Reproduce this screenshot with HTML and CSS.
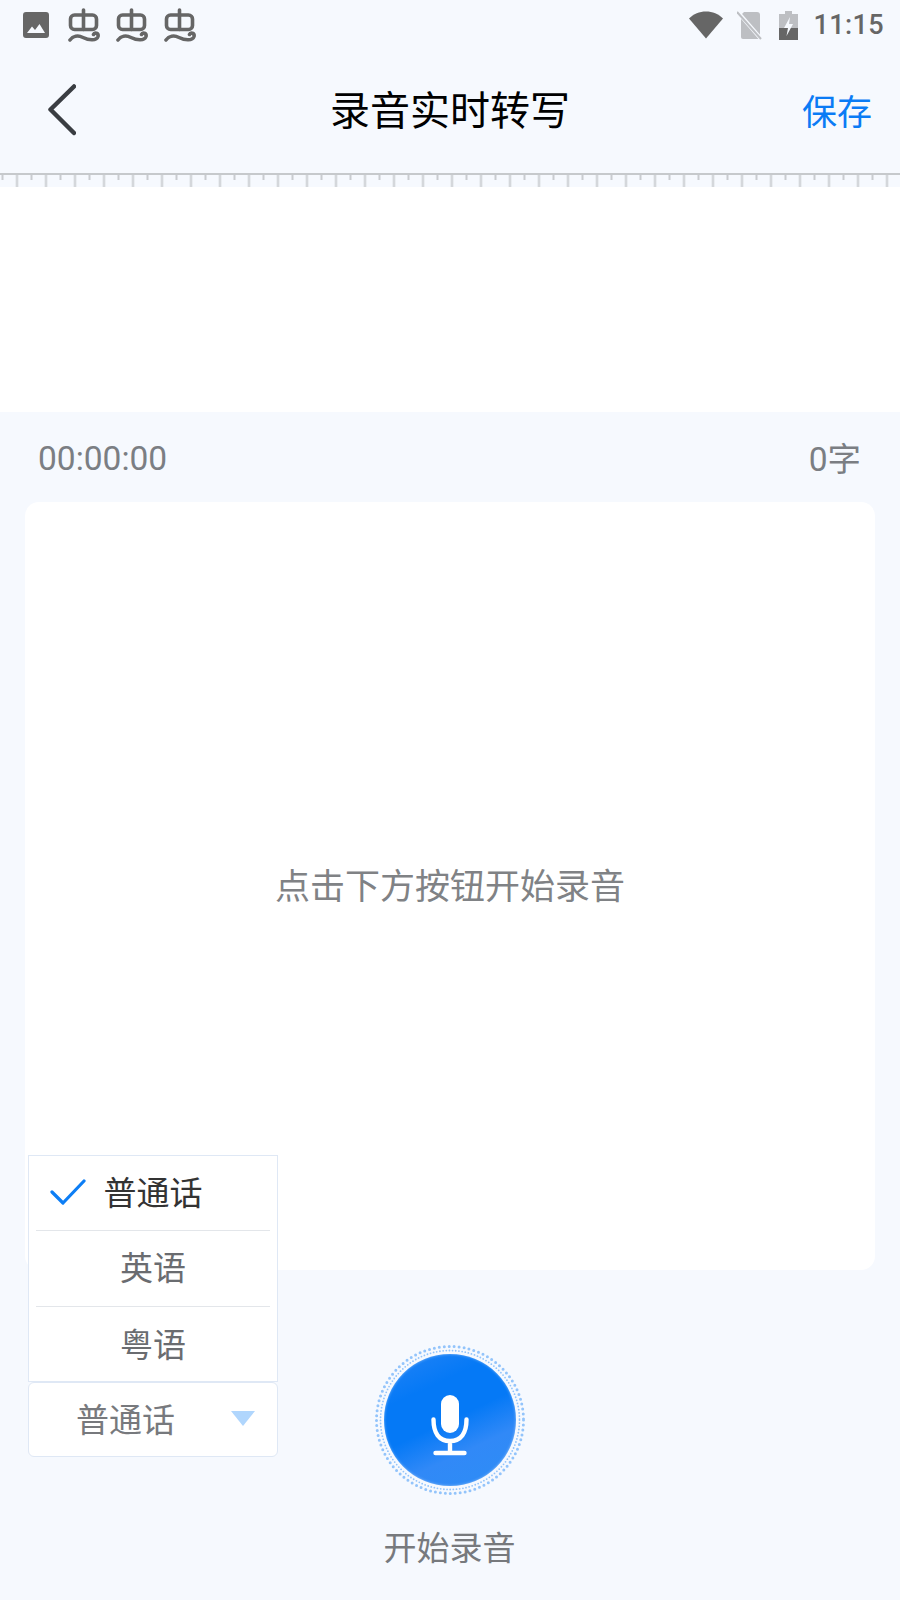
FILE: index.html
```html
<!DOCTYPE html>
<html lang="zh-CN">
<head>
  <meta charset="UTF-8" />
  <meta name="viewport" content="width=device-width, initial-scale=1" />
  <title>录音实时转写</title>
  <link rel="stylesheet" href="styles.css">
</head>
<body>
  <svg width="0" height="0" class="defs">
    <symbol id="bug" viewBox="0 0 32 34">
      <g fill="none" stroke="currentColor" stroke-width="3.600" stroke-linecap="round" stroke-linejoin="round">
        <path d="M15.500 2V21.500"/>
        <rect x="2.500" y="7" width="26" height="14.500" rx="4"/>
        <path d="M2 32C5 28 10 27 15 29.500C21 32.500 28.500 33 30 28.500C30.800 25 26.500 24 25.500 26.500"/>
      </g>
    </symbol>
  </svg>

  <div class="statusbar">
    <div class="status-left">
      <svg class="ic-image" viewBox="0 0 26 26"><path fill="currentColor" fill-rule="evenodd" d="M3 0H23A3 3 0 0 1 26 3V23A3 3 0 0 1 23 26H3A3 3 0 0 1 0 23V3A3 3 0 0 1 3 0ZM4 21H22L16.500 12L12 18L9 14.500Z"/></svg>
      <svg class="ic-bug"><use href="#bug"/></svg>
      <svg class="ic-bug"><use href="#bug"/></svg>
      <svg class="ic-bug"><use href="#bug"/></svg>
    </div>
    <div class="status-right">
      <svg class="ic-wifi" viewBox="0 0 34 28"><path fill="currentColor" d="M0 7.500C4.500 3 10.500 .5 17 .5S29.500 3 34 7.500L17 27.500Z"/></svg>
      <svg class="ic-sim" viewBox="0 0 26 29"><path fill="#bdbfc3" d="M7 1H20A3 3 0 0 1 23 4V26A2 2 0 0 1 21 28H6A2 2 0 0 1 4 26V4Z"/><path stroke="#f6f9fe" stroke-width="4" d="M-1 -1L25 29"/><path stroke="#bdbfc3" stroke-width="2" d="M0 1L24 28"/></svg>
      <svg class="ic-battery" viewBox="0 0 19 29"><path fill="#bdbfc3" d="M6 0H13V3H19V29H0V3H6Z"/><path fill="#666" d="M0 17H19V29H0Z"/><path fill="#f6f9fe" d="M11 6L5 17H9L7.500 25L14 13H10Z"/></svg>
      <span class="clock">11:15</span>
    </div>
  </div>

  <header class="navbar">
    <svg class="ic-back" viewBox="0 0 28 52"><path fill="none" stroke="#3a3d42" stroke-width="4.500" stroke-linecap="round" stroke-linejoin="round" d="M26 2.500L2.500 25.500L26 49"/></svg>
    <h1 class="title">录音实时转写</h1>
    <a class="save">保存</a>
  </header>

  <div class="ruler"></div>
  <div class="band"></div>

  <div class="meta">
    <span>00:00:00</span>
    <span class="count">0字</span>
  </div>

  <main class="card">
    <p class="hint">点击下方按钮开始录音</p>
  </main>

  <footer class="footer">
    <div class="lang">
      <ul class="lang-menu">
        <li class="lang-item selected">
          <svg class="ic-check" viewBox="0 0 36 26"><path fill="none" stroke="#0d7ef5" stroke-width="3.200" stroke-linecap="round" stroke-linejoin="round" d="M2 13L13 24L34 2"/></svg>
          普通话
        </li>
        <li class="lang-item">英语</li>
        <li class="lang-item">粤语</li>
      </ul>
      <div class="lang-select">
        <span>普通话</span>
        <i class="caret"></i>
      </div>
    </div>

    <div class="record">
      <div class="mic">
        <svg class="mic-ring" viewBox="0 0 150 150">
          <circle class="dots-outer" cx="75" cy="75" r="73.500"/>
          <circle class="dots-inner" cx="75" cy="75" r="69.500"/>
        </svg>
        <div class="mic-disc"></div>
        <svg class="mic-icon" viewBox="0 0 150 150">
          <rect x="66" y="50" width="18" height="38" rx="9" fill="#fff"/>
          <path fill="none" stroke="#fff" stroke-width="4.400" stroke-linecap="round" d="M58.500 74.500C58.500 88 64 96 75 96S91.500 88 91.500 74.500M75 96V107M60.500 108H89.500"/>
        </svg>
      </div>
      <div class="record-label">开始录音</div>
    </div>
  </footer>
</body>
</html>
```

FILE: styles.css
```css
html, body {
  margin: 0;
  padding: 0;
  width: 900px;
  height: 1600px;
  overflow: hidden;
  background: #f6f9fe;
  font-family: "Noto Sans CJK SC", "Noto Sans", sans-serif;
}

.defs {
  position: absolute;
}

/* status bar */
.statusbar {
  height: 50px;
  display: flex;
  justify-content: space-between;
  align-items: center;
  color: #666;
}

.status-left {
  display: flex;
  align-items: center;
  padding-left: 23px;
}

.ic-image {
  width: 26px;
  height: 26px;
  margin-right: 19px;
}

.ic-bug {
  width: 32px;
  height: 34px;
  margin-right: 16px;
  margin-top: -1px;
}

.status-right {
  display: flex;
  align-items: center;
  padding-right: 16px;
}

.ic-wifi {
  width: 34px;
  height: 28px;
  margin-right: 14px;
}

.ic-sim {
  width: 26px;
  height: 29px;
  margin-right: 16px;
}

.ic-battery {
  width: 19px;
  height: 29px;
  margin-right: 15px;
}

.clock {
  font-family: Roboto, sans-serif;
  font-weight: 500;
  font-size: 27px;
  letter-spacing: 0.4px;
  white-space: nowrap;
}

/* nav */
.navbar {
  height: 123px;
  display: flex;
  align-items: center;
  justify-content: center;
  position: relative;
}

.ic-back {
  position: absolute;
  left: 48px;
  top: 34px;
  width: 28px;
  height: 52px;
}

.title {
  margin: 0 0 8px;
  font-size: 40px;
  font-weight: 400;
  color: #000;
}

.save {
  position: absolute;
  right: 28px;
  top: 34px;
  font-size: 35px;
  color: #0a7bf5;
}

/* top line, long ticks, short ticks */
.ruler {
  height: 14px;
  background-color: #f6f9fe;
  background-image:
    linear-gradient(#c6c9cc, #c6c9cc),
    linear-gradient(90deg, transparent 0, #c9ccd0 1px, #c9ccd0 2px, transparent 3px),
    linear-gradient(90deg, transparent 0, #c9ccd0 1px, #c9ccd0 2px, transparent 3px);
  background-size: 100% 2px, 29px 14px, 29px 7px;
  background-position: 0 0, 15.500px 0, 30px 0;
  background-repeat: repeat-x;
}

.band {
  height: 225px;
  background: #fff;
}

.meta {
  height: 90px;
  display: flex;
  justify-content: space-between;
  align-items: center;
  padding: 2px 39px 0 38px;
  box-sizing: border-box;
  font-family: Roboto, "Noto Sans CJK SC", sans-serif;
  font-size: 33.500px;
  color: #7b7e83;
}

.count {
  margin-bottom: 4px;
}

.card {
  height: 768px;
  margin: 0 25px;
  background: #fff;
  border-radius: 14px;
  display: flex;
  align-items: center;
  justify-content: center;
}

.hint {
  margin: 0 0 6px;
  font-size: 35px;
  color: #808285;
}

/* bottom part */
.footer {
  display: grid;
  grid-template-columns: 1fr auto 1fr;
  height: 330px;
}

.lang {
  position: relative;
  width: 250px;
  margin: 112px 0 0 28px;
}

.lang-menu {
  position: absolute;
  left: 0;
  bottom: 100%;
  width: 250px;
  margin: 0;
  padding: 0 7px;
  box-sizing: border-box;
  list-style: none;
  background: #fff;
  border: 1px solid #dfe8f5;
}

.lang-item {
  height: 76px;
  padding-bottom: 5px;
  box-sizing: border-box;
  display: flex;
  align-items: center;
  justify-content: center;
  font-size: 33px;
  color: #6a6c70;
  border-bottom: 1px solid #e3e6ea;
  position: relative;
}

.lang-item:last-child {
  border-bottom: 0;
  height: 74px;
  padding-bottom: 3px;
}

.lang-item.selected {
  height: 75px;
  padding-bottom: 4px;
  color: #333;
}

.ic-check {
  position: absolute;
  left: 14px;
  top: 23px;
  width: 36px;
  height: 26px;
}

.lang-select {
  height: 75px;
  box-sizing: border-box;
  display: flex;
  align-items: center;
  padding: 0 0 3px 47px;
  font-size: 33px;
  color: #77797d;
  background: #fff;
  border: 1px solid #dfe8f5;
  border-radius: 6px;
  position: relative;
}

.caret {
  position: absolute;
  right: 22px;
  top: 28px;
  width: 0;
  height: 0;
  border-left: 12px solid transparent;
  border-right: 12px solid transparent;
  border-top: 15px solid #b0d6fd;
}

.record {
  display: flex;
  flex-direction: column;
  align-items: center;
  padding-top: 75px;
  margin-left: -1px;
}

.mic {
  width: 150px;
  height: 150px;
  position: relative;
  display: flex;
  align-items: center;
  justify-content: center;
}

.mic-ring,
.mic-icon {
  position: absolute;
  left: 0;
  top: 0;
  width: 150px;
  height: 150px;
}

.dots-outer,
.dots-inner {
  fill: none;
  stroke: #93c4fb;
  stroke-linecap: round;
}

.dots-outer {
  stroke-width: 3;
  stroke-dasharray: 0 5;
}

.dots-inner {
  stroke-width: 1.800;
  stroke-dasharray: 0 3.200;
}

.mic-disc {
  width: 132px;
  height: 132px;
  border-radius: 50%;
  background: linear-gradient(155deg, #2484f6 0%, #0579f6 28%, #0579f6 50%, #3189f7 70%, #2f8bf6 85%, #1d82f5 100%);
  box-shadow: inset 0 0 3px rgba(255, 255, 255, 0.45);
}

.record-label {
  margin-top: 28px;
  font-size: 33px;
  line-height: 46px;
  color: #77797d;
}
```
